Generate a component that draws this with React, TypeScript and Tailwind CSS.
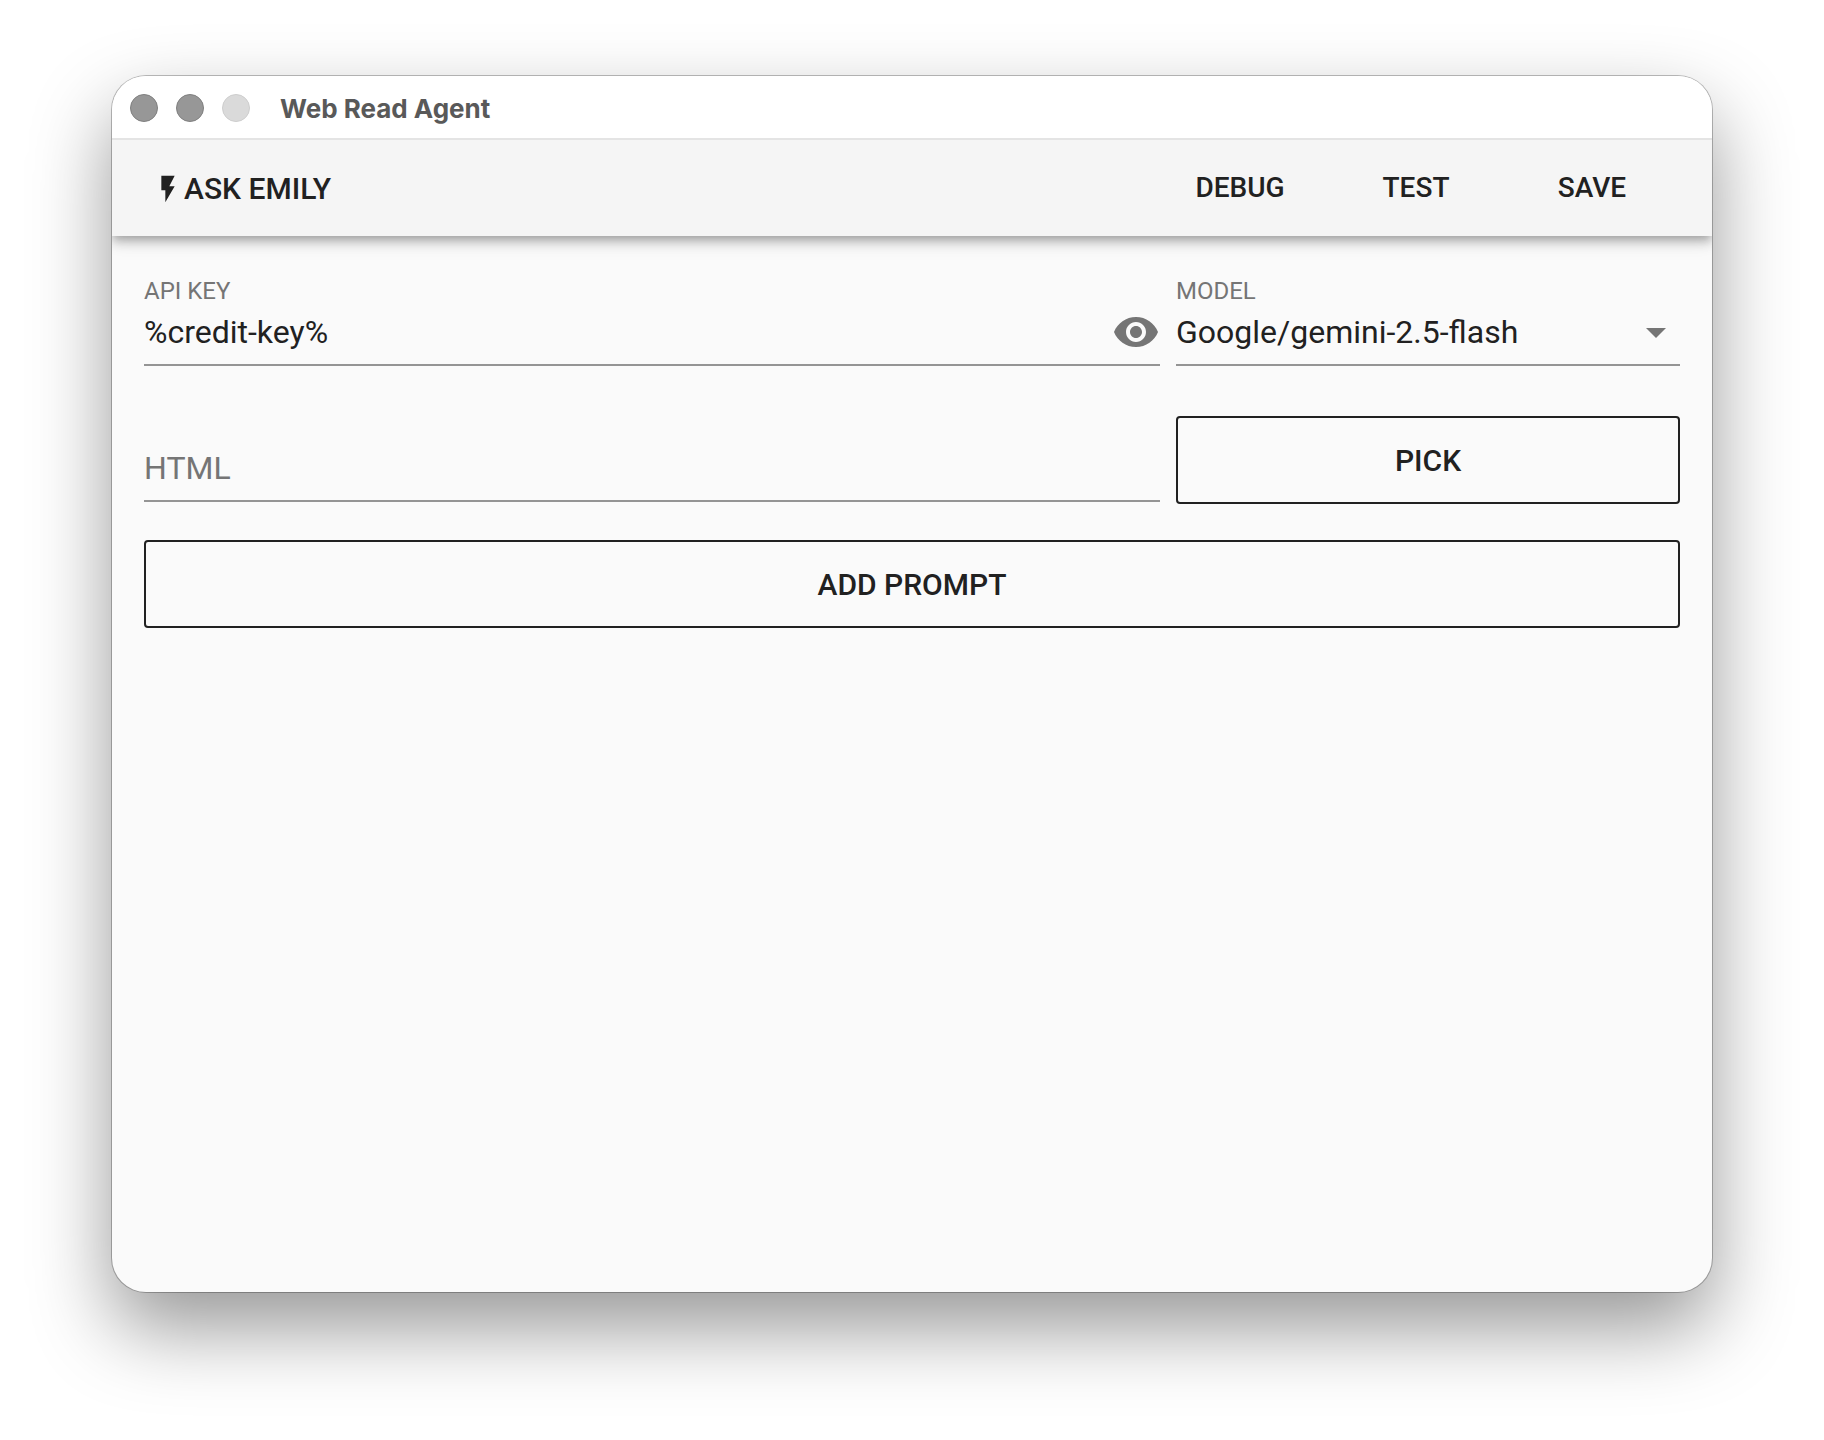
import { useState } from "react";

const actions = ["Debug", "Test", "Save"];

function TitleBar() {
  return (
    <div className="relative z-10 flex h-16 items-center border-b-2 border-[#e4e4e4] bg-white px-[18px] pt-0.5">
      <div className="flex gap-[18px]">
        <span className="size-7 rounded-full border border-[#7f7f7f] bg-[#979797]" />
        <span className="size-7 rounded-full border border-[#7f7f7f] bg-[#979797]" />
        <span className="size-7 rounded-full border border-[#cdcdcd] bg-[#dadada]" />
      </div>
      <h1 className="ml-[30px] pt-0.5 font-[Inter,sans-serif] text-[26px] leading-8 font-bold text-[#595959]">
        Web Read Agent
      </h1>
    </div>
  );
}

function Toolbar() {
  return (
    <header className="relative flex h-24 items-center justify-between bg-[#f5f5f5] pr-8 pl-10 font-medium shadow-[0_4px_8px_-2px_rgba(0,0,0,0.2),0_8px_10px_0_rgba(0,0,0,0.14),0_2px_20px_0_rgba(0,0,0,0.12)]">
      <button type="button" className="flex items-center pt-0.5 text-[30px] leading-9 uppercase">
        <svg viewBox="0 0 24 24" className="size-8" fill="currentColor" aria-hidden="true">
          <path d="M7 2v11h3v9l7-12h-4l4-8z" />
        </svg>
        Ask Emily
      </button>
      <nav className="flex">
        {actions.map((name) => (
          <button key={name} type="button" className="h-18 w-44 text-[28px] leading-8 uppercase">
            {name}
          </button>
        ))}
      </nav>
    </header>
  );
}

const outlined =
  "h-[88px] w-full rounded-[4px] border-2 border-[#212121] pt-0.5 text-[30px] leading-9 font-medium uppercase";

export default function App() {
  const [apiKey, setApiKey] = useState("%credit-key%");
  const [html, setHtml] = useState("");

  return (
    <div className="flex min-h-screen flex-col bg-white px-28 pt-19 pb-37 font-[Roboto,sans-serif] text-[#212121]">
      <main className="flex grow flex-col overflow-hidden rounded-[34px] bg-[#fafafa] shadow-[0_0_0_1px_rgba(0,0,0,0.25),0_36px_80px_0_rgba(0,0,0,0.41)]">
        <TitleBar />
        <Toolbar />
        <form className="flex flex-col px-8 pt-10" onSubmit={(e) => e.preventDefault()}>
          <div className="grid grid-cols-[127fr_63fr] gap-x-4">
            <div className="flex flex-col">
              <label htmlFor="api-key" className="text-2xl leading-[30px] text-[#757575] uppercase">
                Api key
              </label>
              <div className="flex h-15 items-center border-b-2 border-[#949494] pb-1.5">
                <input
                  id="api-key"
                  className="min-w-0 grow bg-transparent text-[32px] leading-10 outline-none"
                  value={apiKey}
                  onChange={(e) => setApiKey(e.target.value)}
                />
                <button type="button" aria-label="Toggle key visibility" className="text-[#757575]">
                  <svg viewBox="0 0 24 24" className="size-12" fill="currentColor" aria-hidden="true">
                    <path d="M12 4.5C7 4.5 2.73 7.61 1 12c1.73 4.39 6 7.5 11 7.5s9.27-3.11 11-7.5c-1.73-4.39-6-7.5-11-7.5zM12 17c-2.76 0-5-2.24-5-5s2.24-5 5-5 5 2.24 5 5-2.24 5-5 5zm0-8c-1.66 0-3 1.34-3 3s1.34 3 3 3 3-1.34 3-3-1.34-3-3-3z" />
                  </svg>
                </button>
              </div>
            </div>
            <div className="flex flex-col">
              <label htmlFor="model" className="text-2xl leading-[30px] text-[#757575] uppercase">
                Model
              </label>
              <div className="grid h-15 items-center border-b-2 border-[#949494] pb-1.5">
                <select
                  id="model"
                  className="col-start-1 row-start-1 w-full appearance-none bg-transparent text-[32px] leading-10 outline-none"
                >
                  <option>Google/gemini-2.5-flash</option>
                </select>
                <svg
                  viewBox="0 0 24 24"
                  className="pointer-events-none col-start-1 row-start-1 size-12 justify-self-end text-[#757575]"
                  fill="currentColor"
                  aria-hidden="true"
                >
                  <path d="M7 10l5 5 5-5z" />
                </svg>
              </div>
            </div>
          </div>
          <div className="mt-[50px] grid grid-cols-[127fr_63fr] items-end gap-x-4">
            <input
              aria-label="HTML"
              placeholder="HTML"
              className="mb-0.5 h-15 min-w-0 border-b-2 border-[#949494] bg-transparent pb-1.5 text-[32px] leading-10 outline-none placeholder:text-[#757575]"
              value={html}
              onChange={(e) => setHtml(e.target.value)}
            />
            <button type="button" className={outlined}>
              Pick
            </button>
          </div>
          <div className="mt-9">
            <button type="button" className={outlined}>
              Add prompt
            </button>
          </div>
        </form>
      </main>
    </div>
  );
}
